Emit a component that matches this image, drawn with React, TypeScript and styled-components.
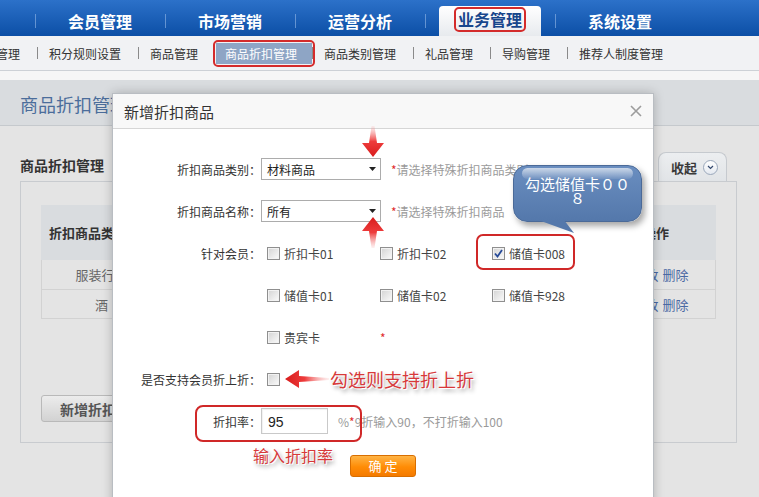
import styled, { createGlobalStyle, css } from "styled-components";

const GlobalStyle = createGlobalStyle`
  html, body { margin: 0; padding: 0; background: #fff; }
  body { font-family: "Noto Sans CJK SC", "Liberation Sans", sans-serif; }
  *, *::before, *::after { box-sizing: border-box; }
`;

const Screen = styled.div`
  position: relative;
  width: 759px;
  height: 497px;
  overflow: hidden;
  background: #e4e4e4;
  font-family: "Noto Sans CJK SC", "Liberation Sans", sans-serif;
`;

/* ---------- main navigation ---------- */

const TopNav = styled.nav`
  display: flex;
  height: 36px;
  padding: 6px 0 0 35px;
  background: linear-gradient(#2c71c9, #0c4fa6);
`;

const NavCell = styled.div`
  position: relative;
  display: flex;
  justify-content: center;
  width: 130px;
  height: 30px;

  &::before {
    content: "";
    position: absolute;
    left: 0;
    top: 8px;
    width: 1px;
    height: 14px;
    background: rgba(150, 185, 232, 0.6);
  }
`;

const NavLink = styled.a<{ $active?: boolean }>`
  display: flex;
  align-items: center;
  justify-content: center;
  width: ${(p) => (p.$active ? "102px" : "auto")};
  height: 30px;
  border-radius: 4px 4px 0 0;
  background: ${(p) => (p.$active ? "linear-gradient(#ffffff, #e7eaee)" : "transparent")};
  color: ${(p) => (p.$active ? "#17468c" : "#fff")};
  font-size: 16px;
  font-weight: 700;
  line-height: 20px;
  text-decoration: none;
  white-space: nowrap;
`;

const RedRing = styled.span`
  margin-top: -3px;
  padding: 1px 2px;
  border: 2px solid #d42b2b;
  border-radius: 5px;
  line-height: 19px;
`;

/* ---------- secondary navigation ---------- */

const SubNav = styled.div`
  display: flex;
  align-items: center;
  height: 35px;
  background: #f1f2f4;
  border-bottom: 1px solid #cdd1d6;
`;

const SubList = styled.div`
  display: flex;
  align-items: center;
  margin-left: -15px;
`;

const SubItem = styled.a<{ $active?: boolean }>`
  position: relative;
  padding: ${(p) => (p.$active ? "0 15px 0 9px" : "0 17px 0 11px")};
  font-size: 12px;
  line-height: 21px;
  color: ${(p) => (p.$active ? "#fff" : "#333")};
  background: ${(p) => (p.$active ? "#8ea5c5" : "transparent")};
  white-space: nowrap;

  ${(p) =>
    p.$active &&
    css`
      &::after {
        content: "";
        position: absolute;
        inset: -3px;
        border: 2px solid #d42b2b;
        border-radius: 5px;
      }
    `}
`;

const SubSep = styled.span<{ $hidden?: boolean }>`
  width: 1px;
  height: 12px;
  background: ${(p) => (p.$hidden ? "transparent" : "#8a8a8a")};
`;

const Strip = styled.div`
  height: 9px;
  background: #f6f6f6;
`;

/* ---------- page (dimmed behind the dialog) ---------- */

const PageHeader = styled.div`
  height: 46px;
  padding: 3px 0 0 20px;
  background: #d9dcdf;
  border-bottom: 1px solid #c5c9cd;
  font-size: 18px;
  line-height: 42px;
  color: #4b6d9b;
`;

const Content = styled.div`
  padding: 0 22px 0 20px;
`;

const ContentHead = styled.div`
  display: flex;
  align-items: flex-end;
  justify-content: space-between;
  height: 55px;
`;

const SectionTitle = styled.div`
  margin-bottom: 6px;
  font-size: 14px;
  font-weight: 700;
  line-height: 20px;
  color: #333;
`;

const CollapseTab = styled.div`
  display: flex;
  align-items: center;
  gap: 6px;
  height: 29px;
  margin-right: 10px;
  padding: 0 8px 0 12px;
  border: 1px solid #c6cacf;
  border-bottom: none;
  border-radius: 8px 8px 0 0;
  background: linear-gradient(#eceef0, #e1e4e7);
  font-size: 13px;
  font-weight: 700;
  color: #3a3a3a;
`;

const RoundIcon = styled.span`
  display: flex;
  align-items: center;
  justify-content: center;
  width: 15px;
  height: 15px;
  border: 1px solid #9aa8bb;
  border-radius: 50%;
  background: linear-gradient(#ffffff, #e4e9f0);
`;

const Panel = styled.div`
  padding: 23px 20px 20px 20px;
  border: 1px solid #c8cbcf;
`;

const Table = styled.div`
  display: grid;
  grid-template-columns: 120px 1fr 1fr 1fr 120px;
`;

const HeadCell = styled.div<{ $align?: string }>`
  display: flex;
  align-items: center;
  justify-content: ${(p) => p.$align ?? "center"};
  height: 55px;
  padding: 0 8px;
  background: #d9dcdf;
  font-size: 13px;
  font-weight: 700;
  color: #333;
`;

const Cell = styled.div<{ $h: number; $first?: boolean; $last?: boolean }>`
  display: flex;
  align-items: center;
  justify-content: center;
  height: ${(p) => p.$h}px;
  padding-left: ${(p) => (p.$last ? "10px" : "0")};
  border-bottom: 1px solid #d2d2d2;
  border-left: ${(p) => (p.$first ? "1px solid #d2d2d2" : "none")};
  border-right: ${(p) => (p.$last ? "1px solid #d2d2d2" : "none")};
  font-size: 13px;
  color: #666;
`;

const TableLink = styled.a`
  margin: 0 2px;
  color: #4a69a3;
`;

const GrayButton = styled.button`
  height: 27px;
  margin-top: 76px;
  padding: 0 18px;
  border: 1px solid #b9b9b9;
  border-radius: 3px;
  background: linear-gradient(#ececec, #d2d2d2);
  font-family: inherit;
  font-size: 14px;
  font-weight: 700;
  color: #555;
`;

/* ---------- dialog ---------- */

const Modal = styled.div`
  position: absolute;
  left: 112px;
  top: 93px;
  width: 542px;
  height: 430px;
  border: 1px solid #b9bdc2;
  background: #fff;
  box-shadow: 0 0 10px rgba(0, 0, 0, 0.22);
`;

const ModalHeader = styled.div`
  display: flex;
  align-items: center;
  justify-content: space-between;
  height: 35px;
  padding: 0 11px;
  border-bottom: 1px solid #d6d6d6;
  background: #f8f8f8;
`;

const ModalTitle = styled.div`
  font-size: 15px;
  color: #333;
`;

const ModalBody = styled.div`
  padding-top: 19px;
`;

const FormRow = styled.div`
  display: grid;
  grid-template-columns: 148px 1fr;
  align-items: center;
  height: 42px;
`;

const Label = styled.div`
  text-align: right;
  font-size: 12px;
  color: #333;
  white-space: nowrap;
`;

const Controls = styled.div`
  display: flex;
  align-items: center;
`;

const SelectBox = styled.div`
  display: flex;
  align-items: center;
  justify-content: space-between;
  width: 120px;
  height: 22px;
  padding: 0 4px 0 5px;
  border: 1px solid #acacac;
  background: #fff;
  font-size: 12px;
  color: #222;
`;

const Hint = styled.span`
  margin-left: 10px;
  font-size: 12px;
  color: #9a9a9a;
  white-space: nowrap;
`;

const Star = styled.span`
  font-size: 12px;
  color: #e02c2c;
`;

const CheckGrid = styled.div`
  display: grid;
  grid-template-columns: 113px 112px 100px;
  align-items: center;
  padding-left: 6px;
`;

const CheckItem = styled.label`
  display: flex;
  align-items: center;
  gap: 4px;
  font-size: 12px;
  color: #444;
  white-space: nowrap;
`;

const Box = styled.span`
  display: flex;
  align-items: center;
  justify-content: center;
  flex: none;
  width: 13px;
  height: 13px;
  border: 1px solid #8f8f8f;
  background: linear-gradient(135deg, #d3d3d3, #fbfbfb);
  box-shadow: inset 0 0 0 1px #f2f2f2;
`;

const RateInput = styled.input`
  width: 67px;
  height: 26px;
  padding: 2px 0 0 6px;
  border: 1px solid #c9c9c9;
  box-shadow: inset 1px 1px 1px rgba(0, 0, 0, 0.06);
  font-family: "Liberation Sans", sans-serif;
  font-size: 14px;
  color: #222;
  outline: none;
`;

const ButtonRow = styled.div`
  margin-top: 10px;
  padding-left: 237px;
`;

const OrangeButton = styled.button`
  width: 66px;
  height: 22px;
  padding: 0;
  border: 1px solid #d86e00;
  border-radius: 3px;
  background: linear-gradient(#ffb445, #ff8c05 55%, #f47a00);
  font-family: inherit;
  font-size: 13px;
  line-height: 20px;
  color: #fff;
`;

/* ---------- annotations drawn over the screenshot ---------- */

const Frame = styled.div<{ $x: number; $y: number; $w: number; $h: number; $r: number }>`
  position: absolute;
  left: ${(p) => p.$x}px;
  top: ${(p) => p.$y}px;
  width: ${(p) => p.$w}px;
  height: ${(p) => p.$h}px;
  border: 2px solid #d02828;
  border-radius: ${(p) => p.$r}px;
  pointer-events: none;
`;

const Callout = styled.div`
  position: absolute;
  left: 513px;
  top: 165px;
  width: 129px;
  height: 57px;
  padding: 11px 10px 0;
  border: 1px solid #4b6a98;
  border-radius: 14px;
  background: linear-gradient(#6a8ec0, #5478ab);
  box-shadow: 3px 4px 6px rgba(0, 0, 0, 0.35);
  font-size: 15px;
  line-height: 14px;
  text-align: center;
  color: #fff;

  &::before {
    content: "";
    position: absolute;
    top: 2px;
    left: 8px;
    right: 8px;
    height: 11px;
    border-radius: 8px;
    background: linear-gradient(rgba(255, 255, 255, 0.65), rgba(255, 255, 255, 0.08));
  }

  &::after {
    content: "";
    position: absolute;
    left: 27px;
    top: 55px;
    width: 33px;
    height: 12px;
    background: #5478ab;
    clip-path: polygon(0 0, 72% 0, 100% 100%);
  }
`;

const RedNote = styled.div<{ $x: number; $y: number; $size: number }>`
  position: absolute;
  left: ${(p) => p.$x}px;
  top: ${(p) => p.$y}px;
  font-size: ${(p) => p.$size}px;
  line-height: 1;
  color: #d7393a;
  white-space: nowrap;
  text-shadow: 0 0 2px #fff, 1px 1px 0 #fff, 2px 3px 4px rgba(0, 0, 0, 0.45);
`;

const ArrowLayer = styled.svg`
  position: absolute;
  left: 0;
  top: 0;
  pointer-events: none;
`;

const navItems = ["会员管理", "市场营销", "运营分析", "业务管理", "系统设置"];
const subItems = ["管理", "积分规则设置", "商品管理", "商品折扣管理", "商品类别管理", "礼品管理", "导购管理", "推荐人制度管理"];
const tableRows = [
  ["服装行业", "所有", "储值卡008", "95"],
  ["酒", "所有", "折扣卡01", "90"],
];
const memberCards = [
  ["折扣卡01", "折扣卡02", "储值卡008"],
  ["储值卡01", "储值卡02", "储值卡928"],
];

const Caret = () => (
  <svg width="7" height="4" viewBox="0 0 7 4">
    <polygon points="0,0 7,0 3.5,4" fill="#222" />
  </svg>
);

const Checkbox = ({ checked }: { checked?: boolean }) => (
  <Box>
    {checked && (
      <svg width="9" height="9" viewBox="0 0 9 9">
        <path d="M1 4.5 L3.5 7.5 L8 1" fill="none" stroke="#274a98" strokeWidth="1.8" />
      </svg>
    )}
  </Box>
);

const App = () => {
  const activeSub = "商品折扣管理";
  return (
    <Screen>
      <GlobalStyle />
      <TopNav>
        {navItems.map((item) => (
          <NavCell key={item}>
            {item === "业务管理" ? (
              <NavLink $active>
                <RedRing>{item}</RedRing>
              </NavLink>
            ) : (
              <NavLink>{item}</NavLink>
            )}
          </NavCell>
        ))}
      </TopNav>

      <SubNav>
        <SubList>
          {subItems.map((item, i) => (
            <>
              {i > 0 && <SubSep key={`s${i}`} $hidden={item === activeSub} />}
              <SubItem key={item} $active={item === activeSub}>
                {item}
              </SubItem>
            </>
          ))}
        </SubList>
      </SubNav>
      <Strip />

      <PageHeader>商品折扣管理</PageHeader>
      <Content>
        <ContentHead>
          <SectionTitle>商品折扣管理</SectionTitle>
          <CollapseTab>
            收起
            <RoundIcon>
              <svg width="7" height="5" viewBox="0 0 7 5">
                <path d="M1 1 L3.5 3.5 L6 1" fill="none" stroke="#34496e" strokeWidth="1.2" />
              </svg>
            </RoundIcon>
          </CollapseTab>
        </ContentHead>
        <Panel>
          <Table>
            <HeadCell $align="flex-start">折扣商品类别</HeadCell>
            <HeadCell>折扣商品名称</HeadCell>
            <HeadCell>针对会员</HeadCell>
            <HeadCell>折扣率</HeadCell>
            <HeadCell>操作</HeadCell>
            {tableRows.map((row, r) => (
              <>
                {row.map((value, c) => (
                  <Cell key={`${r}-${c}`} $h={r === 0 ? 30 : 29} $first={c === 0}>
                    {value}
                  </Cell>
                ))}
                <Cell key={`${r}-op`} $h={r === 0 ? 30 : 29} $last>
                  <TableLink>修改</TableLink>
                  <TableLink>删除</TableLink>
                </Cell>
              </>
            ))}
          </Table>
          <GrayButton>新增折扣商品</GrayButton>
        </Panel>
      </Content>

      <Modal>
        <ModalHeader>
          <ModalTitle>新增折扣商品</ModalTitle>
          <svg width="12" height="12" viewBox="0 0 12 12">
            <path d="M1 1 L11 11 M11 1 L1 11" stroke="#9c9c9c" strokeWidth="1.6" />
          </svg>
        </ModalHeader>
        <ModalBody>
          <FormRow>
            <Label>折扣商品类别：</Label>
            <Controls>
              <SelectBox>
                材料商品
                <Caret />
              </SelectBox>
              <Hint>
                <Star>*</Star>请选择特殊折扣商品类别
              </Hint>
            </Controls>
          </FormRow>
          <FormRow>
            <Label>折扣商品名称：</Label>
            <Controls>
              <SelectBox>
                所有
                <Caret />
              </SelectBox>
              <Hint>
                <Star>*</Star>请选择特殊折扣商品
              </Hint>
            </Controls>
          </FormRow>
          {memberCards.map((cards, r) => (
            <FormRow key={r}>
              <Label>{r === 0 ? "针对会员：" : ""}</Label>
              <CheckGrid>
                {cards.map((card) => (
                  <CheckItem key={card}>
                    <Checkbox checked={card === "储值卡008"} />
                    {card}
                  </CheckItem>
                ))}
              </CheckGrid>
            </FormRow>
          ))}
          <FormRow>
            <Label />
            <CheckGrid>
              <CheckItem>
                <Checkbox />
                贵宾卡
              </CheckItem>
              <Star>*</Star>
            </CheckGrid>
          </FormRow>
          <FormRow>
            <Label>是否支持会员折上折：</Label>
            <CheckGrid>
              <Checkbox />
            </CheckGrid>
          </FormRow>
          <FormRow>
            <Label>折扣率：</Label>
            <Controls>
              <RateInput defaultValue="95" />
              <Hint>
                %<Star>*</Star>9折输入90，不打折输入100
              </Hint>
            </Controls>
          </FormRow>
          <ButtonRow>
            <OrangeButton>确 定</OrangeButton>
          </ButtonRow>
        </ModalBody>
      </Modal>

      <ArrowLayer width="759" height="497" viewBox="0 0 759 497">
        <defs>
          <linearGradient id="fadeDown" gradientUnits="userSpaceOnUse" x1="0" y1="126" x2="0" y2="157">
            <stop offset="0" stopColor="#f6a0a0" stopOpacity="0.15" />
            <stop offset="0.5" stopColor="#ee3c3c" />
            <stop offset="1" stopColor="#d81c1c" />
          </linearGradient>
          <linearGradient id="fadeUp" gradientUnits="userSpaceOnUse" x1="0" y1="248" x2="0" y2="217">
            <stop offset="0" stopColor="#f6a0a0" stopOpacity="0.15" />
            <stop offset="0.5" stopColor="#ee3c3c" />
            <stop offset="1" stopColor="#d81c1c" />
          </linearGradient>
          <linearGradient id="fadeLeft" gradientUnits="userSpaceOnUse" x1="329" y1="0" x2="285" y2="0">
            <stop offset="0" stopColor="#f6a0a0" stopOpacity="0.15" />
            <stop offset="0.55" stopColor="#ee3c3c" />
            <stop offset="1" stopColor="#d81c1c" />
          </linearGradient>
        </defs>
        <polygon points="371.5,126 374.5,126 377,143 384,143 373,157 362,143 369,143" fill="url(#fadeDown)" />
        <polygon points="371.5,248 374.5,248 377,231 384,231 373,217 362,231 369,231" fill="url(#fadeUp)" />
        <polygon points="285,379 299,370 299,376 329,378 329,380 299,382 299,388" fill="url(#fadeLeft)" />
      </ArrowLayer>

      <Frame $x={476} $y={234} $w={99} $h={36} $r={7} />
      <Frame $x={195} $y={405} $w={167} $h={37} $r={8} />
      <Callout>勾选储值卡００８</Callout>
      <RedNote $x={330} $y={370} $size={18}>
        勾选则支持折上折
      </RedNote>
      <RedNote $x={253} $y={447} $size={16}>
        输入折扣率
      </RedNote>
    </Screen>
  );
};

export default App;
